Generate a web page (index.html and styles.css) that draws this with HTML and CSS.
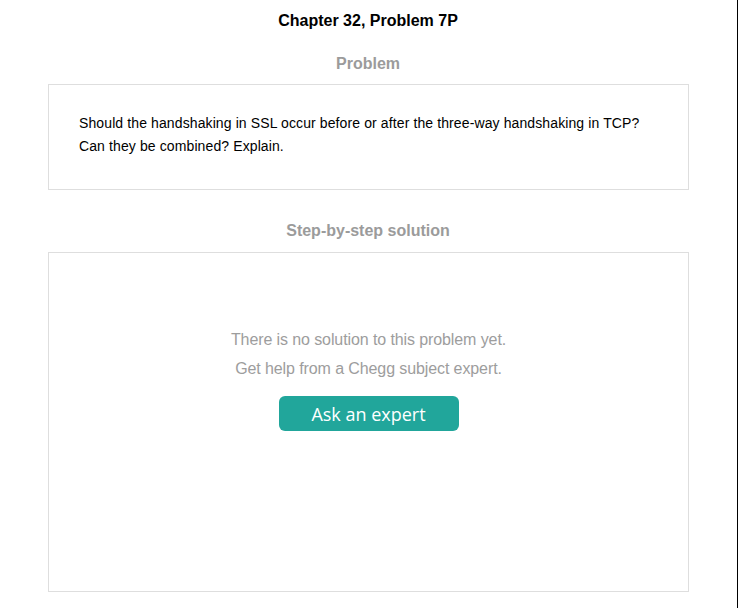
FILE: index.html
```html
<!DOCTYPE html>
<html lang="en">
<head>
<meta charset="utf-8">
<title>Chapter 32, Problem 7P</title>
<link rel="stylesheet" href="styles.css">
</head>
<body>
<div class="page">
  <h1 class="title">Chapter 32, Problem 7P</h1>
  <h2 class="section-head">Problem</h2>
  <div class="box problem-box">
    <p class="problem-text">Should the handshaking in SSL occur before or after the three-way handshaking in TCP? Can they be combined? Explain.</p>
  </div>
  <h2 class="section-head step-head">Step-by-step solution</h2>
  <div class="box solution-box">
    <p class="empty-text">There is no solution to this problem yet.</p>
    <p class="empty-text">Get help from a Chegg subject expert.</p>
    <button class="ask-btn" type="button">Ask an expert</button>
  </div>
</div>
</body>
</html>
```

FILE: styles.css
```css
html, body {
  margin: 0;
  padding: 0;
  background: #fff;
}

body {
  font-family: "Liberation Sans", Arial, sans-serif;
  color: #000;
}

.page {
  box-sizing: border-box;
  width: 738px;
  height: 608px;
  padding: 12px 49px 0 48px;
  border-right: 1px solid #000;
  display: flex;
  flex-direction: column;
  overflow: hidden;
}

.title {
  margin: 0;
  font-size: 16px;
  line-height: 18px;
  font-weight: bold;
  text-align: center;
  color: #000;
}

.section-head {
  margin: 25px 0 11px;
  font-size: 16px;
  line-height: 18px;
  font-weight: bold;
  text-align: center;
  color: #9b9b9b;
}

.step-head {
  margin: 32px 0 12px;
}

.box {
  box-sizing: border-box;
  width: 641px;
  border: 1px solid #dedede;
  background: #fff;
}

.problem-box {
  height: 106px;
  padding: 27px 30px 0;
}

.problem-text {
  margin: 0;
  font-size: 14px;
  line-height: 23px;
  letter-spacing: 0.11px;
  color: #000;
}

.solution-box {
  height: 340px;
  padding-top: 72px;
  display: flex;
  flex-direction: column;
  align-items: center;
}

.empty-text {
  margin: 0;
  font-size: 16px;
  line-height: 29px;
  letter-spacing: -0.1px;
  color: #9d9d9d;
}

.ask-btn {
  margin-top: 13px;
  width: 180px;
  height: 35px;
  border: none;
  border-radius: 6px;
  background: #21a69b;
  color: #fff;
  font-family: "Open Sans", "Noto Sans", sans-serif;
  font-size: 18px;
  padding: 0;
  display: flex;
  align-items: center;
  justify-content: center;
}
```
